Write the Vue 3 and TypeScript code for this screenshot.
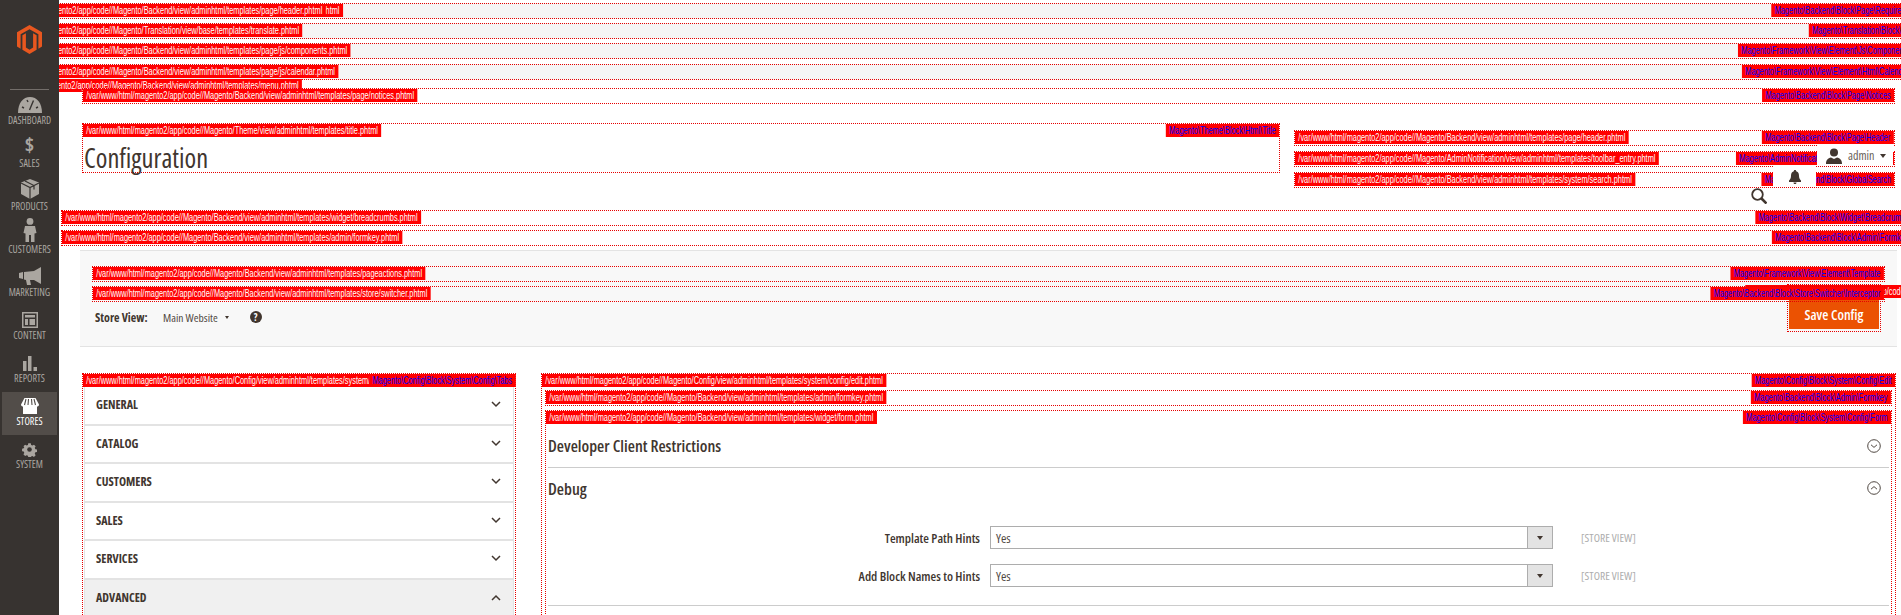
<template>
  <div class="page">
    <aside class="sidebar">
      <div class="logo">
        <svg width="25" height="29" viewBox="0 0 25 29">
          <path fill="#e8571f" d="M12.5 0L25 7.2v14.4l-3.6 2.1V9.3l-8.9-5.1-8.9 5.1v14.4L0 21.6V7.2z" />
          <path fill="#e8571f" d="M5.4 10.3l3.5-2.1v14.4l3.6 2.1 3.6-2.1V8.2l3.5 2.1v14.4L12.5 29l-7.1-4.3z" />
        </svg>
      </div>
      <nav class="nav">
        <div v-for="item in menu" :key="item" class="nav-item" :class="{ active: item === 'Stores' }">
          <span class="nav-icon">
            <svg v-if="item === 'Dashboard'" width="24" height="16" viewBox="0 0 24 16">
              <path fill="currentColor" d="M0 16C0 6 5 0 12 0s12 6 12 16z" />
              <path stroke="#373330" stroke-width="1.4" d="M15.5 3.5L11.5 13M4 10l2 1M20 10l-2 1M9 3l1 2" />
            </svg>
            <span v-else-if="item === 'Sales'" class="dollar">$</span>
            <svg v-else-if="item === 'Products'" width="20" height="20" viewBox="0 0 20 20">
              <path fill="currentColor" d="M10 0l9 3.5v11.5L10 20 1 15V3.500z" />
              <path fill="none" stroke="#373330" stroke-width="1.2" d="M1 4l9 4.500L19 4M10 8.500V20M5 2l9 4.500v4" />
            </svg>
            <svg v-else-if="item === 'Customers'" width="14" height="24" viewBox="0 0 14 24">
              <circle cx="7" cy="3.400" r="3.400" fill="currentColor" />
              <path fill="currentColor" d="M2 8h10l1.500 7-2 .5V24H8v-7H6v7H2.500v-8.500l-2-.5z" />
            </svg>
            <svg v-else-if="item === 'Marketing'" width="22" height="18" viewBox="0 0 22 18">
              <path fill="currentColor" d="M0 6l4-1 0 7-4-1zM5 5l10-1 7-4v17l-7-4H11l1 5H8l-1-5-2-.5z" />
            </svg>
            <svg v-else-if="item === 'Content'" width="16" height="16" viewBox="0 0 16 16">
              <path fill="none" stroke="currentColor" stroke-width="1.500" d="M.750.750h14.500v14.500H.750z" />
              <path fill="currentColor" d="M3 3h10v2.500H3zM3 7h3v6H3zM7.500 7H13v6H7.500z" />
            </svg>
            <svg v-else-if="item === 'Reports'" width="14" height="15" viewBox="0 0 14 15">
              <path fill="currentColor" d="M0 5h3.500v10H0zM5 0h3.500v15H5zM10.500 11H14v4h-3.500z" />
            </svg>
            <svg v-else-if="item === 'Stores'" width="18" height="16" viewBox="0 0 18 16">
              <path fill="#fff" d="M3.500 0h11L18 6.500c0 1.500-1 2-2 2v7.500H2V8.500c-1 0-2-.5-2-2z" />
              <path stroke="#524d49" stroke-width="1.100" d="M5 1L3.500 7M7.500 1L7 7M10.500 1L11 7M13 1l1.500 6" />
            </svg>
            <svg v-else-if="item === 'System'" width="15" height="15" viewBox="0 0 15 15">
              <path fill="currentColor" d="M6 0h3l.400 2 1.700.7 1.700-1.100 2.100 2.100-1.100 1.700.7 1.700 2 .400v3l-2 .400-.7 1.700 1.100 1.700-2.100 2.100-1.700-1.100-1.700.7L9 17H6l-.400-2-1.700-.7-1.700 1.100L.100 13.300l1.100-1.700-.7-1.700-2-.400v-3l2-.400.7-1.700L.100 3.700 2.200 1.600l1.700 1.100 1.700-.7z" transform="translate(1.300 1.300) scale(.83)" />
              <circle cx="7.500" cy="7.500" r="2.300" fill="#373330" />
            </svg>
          </span>
          <span class="nav-label">{{ item }}</span>
        </div>
      </nav>
    </aside>

    <div class="top-hints">
      <div v-for="row in topRows" :key="row.file" class="hint top-row">
        <span v-if="row.under" class="file">{{ base }}{{ row.under }}</span>
        <span class="file">{{ base }}{{ row.file }}</span>
        <span class="cls">{{ row.cls }}</span>
      </div>
      <div class="menu-anchor">
        <span class="file">{{ base }}Magento/Backend/view/adminhtml/templates/menu.phtml</span>
      </div>
    </div>

    <div class="hint notices">
      <span class="file">{{ base }}Magento/Backend/view/adminhtml/templates/page/notices.phtml</span>
      <span class="cls">Magento\Backend\Block\Page\Notices</span>
    </div>

    <header class="page-head">
      <div class="hint title-hint">
        <span class="file">{{ base }}Magento/Theme/view/adminhtml/templates/title.phtml</span>
        <span class="cls">Magento\Theme\Block\Html\Title</span>
        <h1 class="title">Configuration</h1>
      </div>
      <div class="actions">
        <div v-for="row in headRows" :key="row.file" class="hint head-row">
          <span class="file">{{ base }}{{ row.file }}</span>
          <span class="cls">{{ row.cls }}</span>
        </div>
        <div class="admin">
          <svg width="16" height="16" viewBox="0 0 16 16">
            <circle cx="8" cy="4.500" r="4" fill="#41362f" />
            <path fill="#41362f" d="M0 16c0-4 2-6 5-6.500l3 1.500 3-1.500c3 .5 5 2.500 5 6.500z" />
          </svg>
          <span>admin</span>
          <i class="caret"></i>
        </div>
        <div class="bell">
          <svg width="12" height="14" viewBox="0 0 12 14">
            <path fill="#41362f" d="M6 0c.8 0 1.200.5 1.200 1.200C9.500 1.800 10 4 10 6c0 2.500 1 3.500 2 4.500V12H0v-1.500C1 9.500 2 8.500 2 6c0-2 .5-4.200 2.800-4.800C4.800.5 5.200 0 6 0zM4.500 12.500h3C7.500 13.500 6.800 14 6 14s-1.500-.5-1.500-1.500z" />
          </svg>
        </div>
        <svg class="search" width="16" height="16" viewBox="0 0 16 16">
          <circle cx="6.500" cy="6.500" r="5.300" fill="none" stroke="#41362f" stroke-width="1.800" />
          <path stroke="#41362f" stroke-width="2.600" d="M10.500 10.500L15.500 15.500" />
        </svg>
      </div>
    </header>

    <div class="hint crumb">
      <span class="file">{{ base }}Magento/Backend/view/adminhtml/templates/widget/breadcrumbs.phtml</span>
      <span class="cls">Magento\Backend\Block\Widget\Breadcrumbs</span>
    </div>
    <div class="hint formkey-top">
      <span class="file">{{ base }}Magento/Backend/view/adminhtml/templates/admin/formkey.phtml</span>
      <span class="cls">Magento\Backend\Block\Admin\Formkey</span>
    </div>

    <section class="panel">
      <div class="hint panel-row">
        <span class="file">{{ base }}Magento/Backend/view/adminhtml/templates/pageactions.phtml</span>
        <span class="cls">Magento\Framework\View\Element\Template</span>
      </div>
      <div class="hint panel-row switcher">
        <span class="file">{{ base }}Magento/Backend/view/adminhtml/templates/store/switcher.phtml</span>
        <span class="cls">Magento\Backend\Block\Store\Switcher\Interceptor</span>
      </div>
      <div class="store-line">
        <strong>Store View:</strong>
        <span class="store-name">Main Website</span>
        <i class="caret small"></i>
        <span class="help">?</span>
      </div>
      <div class="hint save-hint">
        <span class="file">{{ base }}Magento/Backend/view/adminhtml/templates/widget/button.phtml</span>
        <span class="cls">Magento\Backend\Block\Widget\Button</span>
        <button class="save">Save Config</button>
      </div>
    </section>

    <div class="columns">
      <div class="hint tabs">
        <span class="file">{{ base }}Magento/Config/view/adminhtml/templates/system/config/tabs.phtml</span>
        <span class="cls">Magento\Config\Block\System\Config\Tabs</span>
        <div v-for="tab in tabs" :key="tab" class="tab" :class="{ open: tab === 'Advanced' }">
          <span>{{ tab }}</span>
          <svg width="10" height="7" viewBox="0 0 10 7">
            <path fill="none" stroke="#41362f" stroke-width="1.500" :d="tab === 'Advanced' ? 'M1 6l4-4 4 4' : 'M1 1l4 4 4-4'" />
          </svg>
        </div>
      </div>

      <div class="hint edit">
        <span class="file">{{ base }}Magento/Config/view/adminhtml/templates/system/config/edit.phtml</span>
        <span class="cls">Magento\Config\Block\System\Config\Edit</span>
        <div class="hint inner-key">
          <span class="file">{{ base }}Magento/Backend/view/adminhtml/templates/admin/formkey.phtml</span>
          <span class="cls">Magento\Backend\Block\Admin\Formkey</span>
        </div>
        <div class="hint form">
          <span class="file">{{ base }}Magento/Backend/view/adminhtml/templates/widget/form.phtml</span>
          <span class="cls">Magento\Config\Block\System\Config\Form</span>

          <div class="section closed">
            <h2>Developer Client Restrictions</h2>
            <svg width="14" height="14" viewBox="0 0 14 14">
              <circle cx="7" cy="7" r="6.300" fill="none" stroke="#514943" />
              <path fill="none" stroke="#514943" d="M4 5.800l3 2.600 3-2.600" />
            </svg>
          </div>
          <div class="section">
            <div class="section-head">
              <h2>Debug</h2>
              <svg width="14" height="14" viewBox="0 0 14 14">
                <circle cx="7" cy="7" r="6.300" fill="none" stroke="#514943" />
                <path fill="none" stroke="#514943" d="M4 8.200l3-2.600 3 2.600" />
              </svg>
            </div>
            <div v-for="field in fields" :key="field" class="field">
              <label>{{ field }}</label>
              <div class="select">
                <span>Yes</span>
                <b><i class="caret"></i></b>
              </div>
              <em>[STORE VIEW]</em>
            </div>
          </div>
        </div>
      </div>
    </div>
  </div>
</template>

<script setup lang="ts">
const base = '/var/www/html/magento2/app/code//'

const menu = ['Dashboard', 'Sales', 'Products', 'Customers', 'Marketing', 'Content', 'Reports', 'Stores', 'System']
const tabs = ['General', 'Catalog', 'Customers', 'Sales', 'Services', 'Advanced']
const fields = ['Template Path Hints', 'Add Block Names to Hints']

const topRows = [
  {
    file: 'Magento/Backend/view/adminhtml/templates/page/header.phtml',
    under: 'Magento/Backend/view/adminhtml/templates/page/js/require_js.phtml',
    cls: 'Magento\\Backend\\Block\\Page\\RequireJs'
  },
  { file: 'Magento/Translation/view/base/templates/translate.phtml', cls: 'Magento\\Translation\\Block\\Js' },
  { file: 'Magento/Backend/view/adminhtml/templates/page/js/components.phtml', cls: 'Magento\\Framework\\View\\Element\\Js\\Components' },
  { file: 'Magento/Backend/view/adminhtml/templates/page/js/calendar.phtml', cls: 'Magento\\Framework\\View\\Element\\Html\\Calendar' }
]

const headRows = [
  { file: 'Magento/Backend/view/adminhtml/templates/page/header.phtml', cls: 'Magento\\Backend\\Block\\Page\\Header' },
  { file: 'Magento/AdminNotification/view/adminhtml/templates/toolbar_entry.phtml', cls: 'Magento\\AdminNotification\\Block\\ToolbarEntry' },
  { file: 'Magento/Backend/view/adminhtml/templates/system/search.phtml', cls: 'Magento\\Backend\\Block\\GlobalSearch' }
]
</script>

<style>
html,
body {
  margin: 0;
  overflow: hidden;
}
</style>

<style scoped>
.page {
  position: relative;
  width: 1901px;
  height: 615px;
  overflow: hidden;
  background: #fff;
  color: #41362f;
  font-family: "Open Sans", "Liberation Sans", sans-serif;
  font-stretch: 75%;
}

.sidebar {
  position: absolute;
  left: 0;
  top: 0;
  bottom: 0;
  z-index: 20;
  width: 59px;
  background: #373330;
}

.logo {
  display: flex;
  justify-content: center;
  padding-top: 25px;
  height: 64px;
}

.nav {
  margin: 0 10px;
  border-top: 1px solid #736e6a;
  padding-top: 1px;
}

.nav-item {
  display: flex;
  flex-direction: column;
  align-items: center;
  justify-content: flex-end;
  margin: 0 -8px;
  height: 43px;
  padding-bottom: 8px;
  box-sizing: border-box;
  color: #aaa6a0;
  font-size: 10px;
  font-weight: 400;
  text-transform: uppercase;
}

.nav-item.active {
  background: #524d49;
  color: #fff;
}

.nav-icon {
  display: flex;
  align-items: flex-end;
  justify-content: center;
  height: 24px;
  margin-bottom: 1px;
}

.nav-label {
  line-height: 12px;
}

.dollar {
  font-size: 20px;
  font-weight: 700;
  line-height: 22px;
}

/* debug hint boxes */
.hint {
  position: relative;
  box-sizing: border-box;
  border: 1px dotted #e60000;
}

.file,
.cls {
  position: absolute;
  top: 0;
  padding: 0 5px;
  background: #f00;
  font: 11px/13px "Liberation Sans", Arial, sans-serif;
  white-space: nowrap;
  transform: scaleX(0.67);
}

.file {
  left: 0;
  color: #fff;
  transform-origin: left;
}

.cls {
  right: 0;
  color: #00f;
  transform-origin: right;
}

.top-hints {
  width: 1922px;
  margin-left: -9px;
  padding-top: 3px;
}

.top-row {
  height: 16px;
  margin-bottom: 4px;
  background: #f5f5f5;
}

.top-row:nth-child(3) {
  margin-bottom: 5px;
}

.top-row:nth-child(4) {
  margin-bottom: 0;
}

.menu-anchor {
  position: relative;
  height: 0;
  margin-top: -1px;
}

.notices {
  height: 16px;
  margin: 9px 6px 0 82px;
}

.page-head {
  display: flex;
  align-items: flex-start;
  height: 50px;
  margin-top: 19px;
  padding: 0 6px 0 82px;
}

.title-hint {
  flex: none;
  width: 1198px;
  height: 50px;
  padding-top: 17px;
}

.title {
  margin: 0;
  padding-left: 1px;
  font-size: 26.500px;
  font-weight: 400;
  line-height: 34px;
}

.actions {
  position: relative;
  flex: 1;
  margin: 7px 0 0 14px;
}

.head-row {
  height: 16px;
  margin-bottom: 5px;
}

.admin {
  position: absolute;
  top: 15px;
  right: 2px;
  display: flex;
  align-items: center;
  gap: 6px;
  box-sizing: border-box;
  width: 76px;
  height: 21px;
  padding-left: 9px;
  background: #fff;
  font-size: 12px;
  color: #676056;
}

.bell {
  position: absolute;
  top: 36px;
  right: 79px;
  display: flex;
  align-items: center;
  justify-content: center;
  width: 43px;
  height: 21px;
  background: #fff;
}

.search {
  position: absolute;
  top: 58px;
  right: 128px;
}

.caret {
  width: 0;
  height: 0;
  border: 3px solid transparent;
  border-top: 4px solid #41362f;
  border-bottom: 0;
}

.crumb {
  width: 1852px;
  height: 16px;
  margin: 37px 0 0 61px;
}

.formkey-top {
  width: 1852px;
  height: 16px;
  margin: 4px 0 0 61px;
}

.panel {
  position: relative;
  box-sizing: border-box;
  height: 97px;
  margin: 4px 4px 0 80px;
  padding: 15px 12px 0;
  background: #f8f8f8;
  border-top: 1px solid #e3e3e3;
  border-bottom: 1px solid #e3e3e3;
}

.panel-row {
  height: 16px;
  margin-bottom: 4px;
}

.switcher {
  z-index: 2;
}

.store-line {
  display: flex;
  align-items: center;
  margin: 8px 0 0 3px;
  height: 14px;
  font-size: 12px;
}

.store-line strong {
  width: 68px;
  font-weight: 700;
}

.store-name {
  color: #514943;
  font-size: 11.500px;
}

.caret.small {
  margin: 0 21px 0 7px;
  border-width: 3px 2.5px 0;
}

.help {
  display: flex;
  align-items: center;
  justify-content: center;
  width: 12px;
  height: 12px;
  border-radius: 50%;
  background: #41362f;
  color: #fff;
  font-size: 10px;
  font-weight: 700;
}

.save-hint {
  position: absolute;
  top: 33px;
  left: 1707px;
  box-sizing: border-box;
  width: 94px;
  height: 48px;
  padding: 15px 1px 1px;
}

.save-hint .file {
  z-index: 1;
}

.save {
  display: block;
  width: 90px;
  height: 29px;
  margin: 0 auto;
  border: 0;
  background: #eb5202;
  color: #fff;
  font-family: inherit;
  font-stretch: inherit;
  font-size: 14px;
  font-weight: 600;
}

.columns {
  display: flex;
  align-items: flex-start;
  gap: 25px;
  margin: 26px 5px 0 82px;
}

.tabs {
  flex: none;
  width: 434px;
  padding: 13px 1px 0;
}

.tab {
  display: flex;
  align-items: center;
  justify-content: space-between;
  box-sizing: border-box;
  height: 38.500px;
  padding: 0 12px 1px 11px;
  border: solid #e3e3e3;
  border-width: 0 1px 2px;
  font-size: 12px;
  font-weight: 700;
  text-transform: uppercase;
}

.tab.open {
  background: #f0f0f0;
}

.edit {
  flex: 1;
  height: 300px;
  padding-top: 16px;
}

.inner-key {
  height: 16px;
  margin: 0 3px;
}

.form {
  height: 300px;
  margin: 4px 3px 0;
  padding: 13px 2px 0;
}

.section.closed,
.section-head {
  display: flex;
  align-items: center;
  justify-content: space-between;
  padding-right: 8px;
}

.section.closed {
  height: 43px;
  border-bottom: 1px solid #ccc;
}

.section-head {
  height: 40px;
}

h2 {
  margin: 0;
  font-size: 16.500px;
  font-weight: 600;
}

.section {
  border-bottom: 1px solid #ccc;
  padding-bottom: 18px;
}

.section.closed {
  padding-bottom: 0;
}

.field {
  display: grid;
  grid-template-columns: 442px 563px auto;
  align-items: center;
  height: 23px;
  margin-top: 15px;
  font-size: 13px;
  font-weight: 600;
}

.section-head + .field {
  margin-top: 18px;
}

.field label {
  padding-right: 10px;
  text-align: right;
}

.select {
  display: flex;
  align-items: center;
  justify-content: space-between;
  box-sizing: border-box;
  height: 23px;
  padding-left: 5px;
  border: 1px solid #adadad;
  color: #514943;
  font-weight: 400;
}

.select b {
  display: flex;
  align-items: center;
  justify-content: center;
  width: 24px;
  height: 21px;
  border-left: 1px solid #adadad;
  background: #e3e3e3;
}

.field em {
  margin-left: 28px;
  color: #adadad;
  font-size: 11.500px;
  font-style: normal;
  font-weight: 400;
}
</style>
